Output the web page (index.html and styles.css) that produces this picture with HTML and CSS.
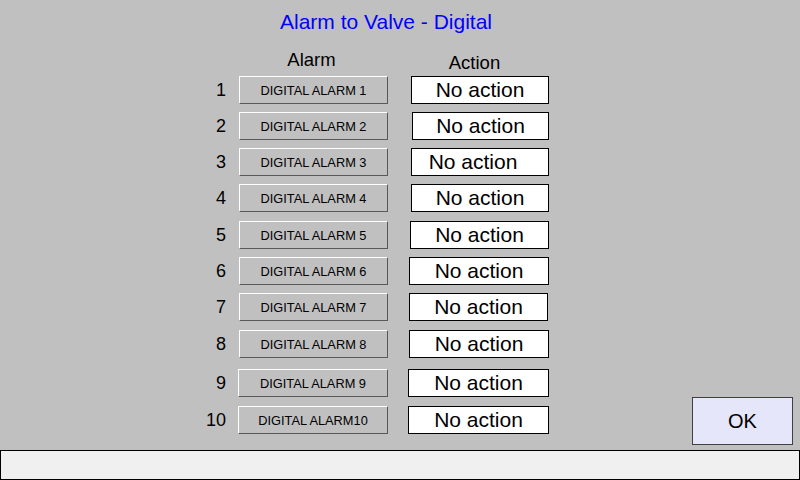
FILE: index.html
```html
<!DOCTYPE html>
<html lang="en">
<head>
    <meta charset="UTF-8">
    <meta name="viewport" content="width=device-width, initial-scale=1.0">
    <title>Alarm to Valve - Digital</title>
    <link rel="stylesheet" href="styles.css">
</head>
<body>
    <div class="screen">
        <main class="panel">
            <h1 class="title">Alarm to Valve - Digital</h1>
            <div class="content">
                <section class="map">
                    <div class="heads">
                        <span class="num"></span>
                        <span class="head-alarm">Alarm</span>
                        <span class="head-action">Action</span>
                    </div>

                    <div class="row">
                        <span class="num">1</span>
                        <button class="alarm">DIGITAL ALARM 1</button>
                        <div class="action">No action</div>
                    </div>
                    <div class="row">
                        <span class="num">2</span>
                        <button class="alarm">DIGITAL ALARM 2</button>
                        <div class="action in1">No action</div>
                    </div>
                    <div class="row">
                        <span class="num">3</span>
                        <button class="alarm">DIGITAL ALARM 3</button>
                        <div class="action lean">No action</div>
                    </div>
                    <div class="row">
                        <span class="num">4</span>
                        <button class="alarm">DIGITAL ALARM 4</button>
                        <div class="action">No action</div>
                    </div>
                    <div class="row nudge1">
                        <span class="num">5</span>
                        <button class="alarm">DIGITAL ALARM 5</button>
                        <div class="action out1">No action</div>
                    </div>
                    <div class="row">
                        <span class="num">6</span>
                        <button class="alarm">DIGITAL ALARM 6</button>
                        <div class="action out2">No action</div>
                    </div>
                    <div class="row">
                        <span class="num">7</span>
                        <button class="alarm">DIGITAL ALARM 7</button>
                        <div class="action out2 short">No action</div>
                    </div>
                    <div class="row nudge1">
                        <span class="num">8</span>
                        <button class="alarm">DIGITAL ALARM 8</button>
                        <div class="action out2">No action</div>
                    </div>
                    <div class="row nudge3">
                        <span class="num">9</span>
                        <button class="alarm wide">DIGITAL ALARM 9</button>
                        <div class="action out3">No action</div>
                    </div>
                    <div class="row nudge1">
                        <span class="num">10</span>
                        <button class="alarm wide">DIGITAL ALARM10</button>
                        <div class="action out3">No action</div>
                    </div>
                </section>

                <button class="ok">OK</button>
            </div>
        </main>
        <footer class="status"></footer>
    </div>
</body>
</html>
```

FILE: styles.css
```css
body {
    margin: 0;
    font-family: "Liberation Sans", Arial, sans-serif;
    background-color: #c0c0c0;
}
.screen {
    width: 800px;
    height: 480px;
    display: flex;
    flex-direction: column;
    background-color: #c0c0c0;
}
.panel {
    height: 450px;
    display: flex;
    flex-direction: column;
}
.title {
    margin: 0;
    padding-top: 10px;
    padding-right: 28px;
    font-size: 21px;
    line-height: 24px;
    font-weight: normal;
    color: #0000ff;
    text-align: center;
}
.content {
    flex: 1;
    display: flex;
}
.map {
    margin-left: 196px;
    padding-top: 16px;
    display: flex;
    flex-direction: column;
    gap: 8px;
}
.heads {
    display: flex;
    height: 18px;
    font-size: 18.5px;
    line-height: 20px;
    color: #000;
}
.heads .num {
    width: 30px;
    margin-right: 13px;
}
.head-alarm {
    width: 149px;
    padding-right: 4px;
    box-sizing: border-box;
    text-align: center;
}
.head-action {
    width: 138px;
    margin-left: 23px;
    margin-top: 3px;
    padding-right: 11px;
    box-sizing: border-box;
    text-align: center;
}
.row {
    display: flex;
    align-items: center;
    height: 28px;
}
.nudge1 {
    margin-top: 1px;
}
.nudge3 {
    margin-top: 3px;
}
.num {
    width: 30px;
    margin-right: 13px;
    text-align: right;
    font-size: 18px;
    color: #000;
}
.alarm {
    width: 149px;
    height: 28px;
    box-sizing: border-box;
    padding: 0;
    margin: 0;
    font-family: "Liberation Sans", Arial, sans-serif;
    font-size: 12.8px;
    color: #000;
    background-color: #c0c0c0;
    border: 1px solid;
    border-color: #ffffff #585858 #585858 #ffffff;
    border-radius: 0;
}
.alarm.wide {
    width: 150px;
    margin-left: -1px;
}
.action {
    width: 138px;
    height: 28px;
    margin-left: 23px;
    box-sizing: border-box;
    display: flex;
    align-items: center;
    justify-content: center;
    font-size: 21px;
    color: #000;
    background-color: #ffffff;
    border: 1px solid #000;
}
.action.in1 {
    width: 137px;
    margin-left: 24px;
}
.action.out1 {
    width: 139px;
    margin-left: 22px;
}
.action.out2 {
    width: 140px;
    margin-left: 21px;
}
.action.out3 {
    width: 141px;
    margin-left: 20px;
}
.action.short {
    width: 139px;
}
.action.lean {
    padding-right: 14px;
}
.ok {
    align-self: flex-end;
    margin-left: auto;
    margin-right: 7px;
    margin-bottom: 5px;
    width: 101px;
    height: 48px;
    padding: 0;
    font-family: "Liberation Sans", Arial, sans-serif;
    font-size: 20px;
    color: #000;
    background-color: #e6e6fa;
    border: 1px solid #404040;
    border-radius: 0;
}
.status {
    height: 30px;
    box-sizing: border-box;
    background-color: #f0f0f0;
    border: 1px solid #000;
}
```
